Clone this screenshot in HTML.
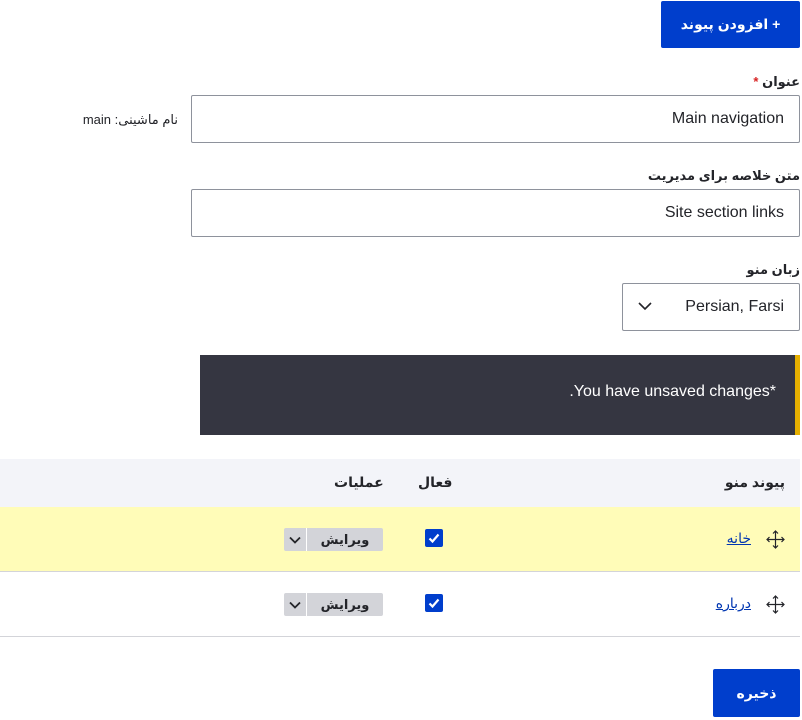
<!DOCTYPE html>
<html><head><meta charset="utf-8"><style>
*{box-sizing:border-box;margin:0;padding:0}
body{width:802px;height:720px;position:relative;background:#fff;font-family:"Liberation Sans","Noto Sans CJK SC","DejaVu Sans",sans-serif;color:#232429;overflow:hidden}
.a{position:absolute}
.btn{background:#003ecc;color:#fff;font-weight:bold;font-size:14px;border-radius:2px;display:flex;align-items:center;justify-content:center;direction:rtl}
.lbl{font-size:13px;font-weight:bold;direction:rtl;text-align:right}
.inp{border:1px solid #8e929c;border-radius:2px;font-size:16px;display:flex;align-items:center;justify-content:flex-end;padding-right:15px}
.row{left:0;width:800px;border-bottom:1px solid #d3d4d9}
.cb{width:18px;height:18px;background:#003ecc;border-radius:2px}
.ed{width:99px;height:23px;background:#d3d4d9;border-radius:2px;display:flex}
.ed .c{width:23px;border-right:1px solid #fff;display:flex;align-items:center;justify-content:center}
.ed .t{flex:1;font-size:13px;font-weight:bold;display:flex;align-items:center;justify-content:center;direction:rtl}
.lnk{color:#0036b1;text-decoration:underline;font-size:14px;direction:rtl}
.th{font-size:14px;font-weight:bold;direction:rtl}
</style></head><body>
<div class="a btn" style="left:661px;top:1px;width:139px;height:47px">+ افزودن پیوند</div>
<div class="a lbl" style="right:2px;top:74px">عنوان <span style="color:#d72222">*</span></div>
<div class="a inp" style="left:191px;top:95px;width:609px;height:48px">Main navigation</div>
<div class="a" style="right:624px;top:112px;font-size:13px;direction:rtl">نام ماشینی: main</div>
<div class="a lbl" style="right:2px;top:168px">متن خلاصه برای مدیریت</div>
<div class="a inp" style="left:191px;top:189px;width:609px;height:48px">Site section links</div>
<div class="a lbl" style="right:2px;top:262px">زبان منو</div>
<div class="a inp" style="left:622px;top:283px;width:178px;height:48px">Persian, Farsi</div>
<svg class="a" style="left:638px;top:301px" width="14" height="10" viewBox="0 0 14 10"><path d="M1 2l6 6 6-6" stroke="#232429" stroke-width="1.6" fill="none"/></svg>
<div class="a" style="left:200px;top:355px;width:600px;height:80px;background:#353641;border-right:5px solid #e6b000"></div>
<div class="a" style="right:26px;top:383px;color:#fff;font-size:16px;direction:ltr">.You have unsaved changes*</div>
<div class="a" style="left:0;top:459px;width:800px;height:48px;background:#f3f4f9"></div>
<div class="a th" style="right:17px;top:474px">پیوند منو</div>
<div class="a th" style="left:418px;top:474px">فعال</div>
<div class="a th" style="left:334px;top:474px">عملیات</div>
<div class="a row" style="top:507px;height:65px;background:#fffcb8"></div>
<div class="a row" style="top:572px;height:65px"></div>
<svg class="a" style="left:766px;top:530px" width="19" height="19" viewBox="0 0 19 19"><path d="M9.5 1v17M1 9.5h17M7 3.5l2.5-2.5 2.5 2.5M7 15.5l2.5 2.5 2.5-2.5M3.5 7L1 9.5 3.5 12M15.5 7L18 9.5 15.5 12" stroke="#232429" stroke-width="1.2" fill="none"/></svg>
<svg class="a" style="left:766px;top:595px" width="19" height="19" viewBox="0 0 19 19"><path d="M9.5 1v17M1 9.5h17M7 3.5l2.5-2.5 2.5 2.5M7 15.5l2.5 2.5 2.5-2.5M3.5 7L1 9.5 3.5 12M15.5 7L18 9.5 15.5 12" stroke="#232429" stroke-width="1.2" fill="none"/></svg>
<div class="a lnk" style="right:51px;top:530px">خانه</div>
<div class="a lnk" style="right:51px;top:595px">درباره</div>
<svg class="a cb" style="left:425px;top:529px" viewBox="0 0 18 18"><path d="M4.5 9.5l3 3 6-7" stroke="#fff" stroke-width="2.2" fill="none"/></svg>
<svg class="a cb" style="left:425px;top:594px" viewBox="0 0 18 18"><path d="M4.5 9.5l3 3 6-7" stroke="#fff" stroke-width="2.2" fill="none"/></svg>
<div class="a ed" style="left:284px;top:528px"><div class="c"><svg width="12" height="8" viewBox="0 0 12 8"><path d="M1 1.5l5 5 5-5" stroke="#232429" stroke-width="1.8" fill="none"/></svg></div><div class="t">ویرایش</div></div>
<div class="a ed" style="left:284px;top:593px"><div class="c"><svg width="12" height="8" viewBox="0 0 12 8"><path d="M1 1.5l5 5 5-5" stroke="#232429" stroke-width="1.8" fill="none"/></svg></div><div class="t">ویرایش</div></div>
<div class="a btn" style="left:713px;top:669px;width:87px;height:48px">ذخیره</div>
</body></html>
